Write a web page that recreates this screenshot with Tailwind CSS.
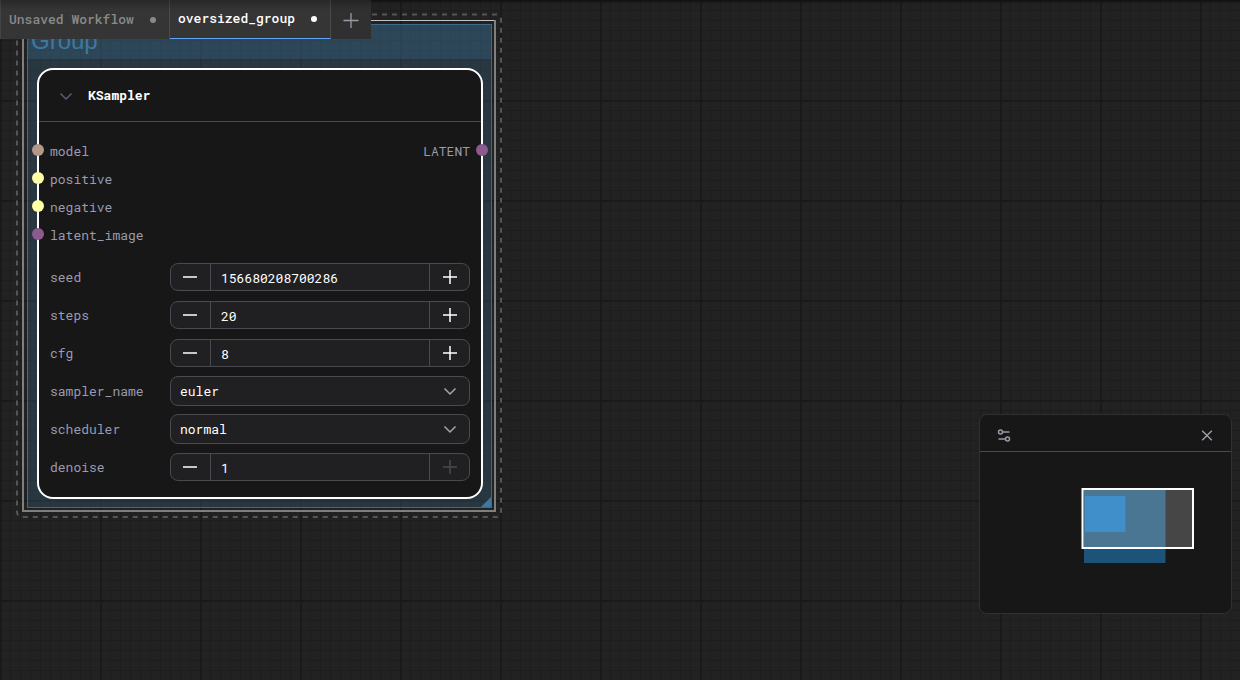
<!DOCTYPE html>
<html lang="en">
<head>
<meta charset="utf-8">
<meta name="viewport" content="width=device-width, initial-scale=1">
<title>oversized_group</title>
<script src="https://cdn.jsdelivr.net/npm/@tailwindcss/browser@4"></script>
</head>
<body class="relative min-h-screen overflow-hidden bg-[#222222] font-['Roboto_Mono','Liberation_Mono',monospace] text-[13px] leading-5 text-[#9a9ab0]">

  <!-- Canvas grid -->
  <svg class="absolute inset-0 h-full w-full" aria-hidden="true">
    <defs>
      <pattern id="grid" width="100" height="100" patternUnits="userSpaceOnUse">
        <path d="M10.5 0V100M20.5 0V100M30.5 0V100M40.5 0V100M50.5 0V100M60.5 0V100M70.5 0V100M80.5 0V100M90.5 0V100M0 10.5H100M0 20.5H100M0 30.5H100M0 40.5H100M0 50.5H100M0 60.5H100M0 70.5H100M0 80.5H100M0 90.5H100" stroke="#1d1d1d" />
        <path d="M1 0V100M0 1H100" stroke="#1a1a1a" stroke-width="2" />
      </pattern>
    </defs>
    <rect width="100%" height="100%" fill="url(#grid)" />
  </svg>

  <main>
    <!-- Group with its selection outlines -->
    <section aria-label="Group" class="absolute top-6 left-[27px] h-[484px] w-[465px] border border-[#3f789e]/80 bg-[#3f789e]/25">
      <h2 class="h-[34px] bg-[#3f789e]/25 pl-[3px] font-['Liberation_Sans',sans-serif] text-2xl leading-8 text-[#3f789e]">Group</h2>
      <svg class="absolute right-0 bottom-0 size-[10px]" viewBox="0 0 10 10" aria-hidden="true"><path d="M10 0V10H0Z" fill="#3f789e" /></svg>
    </section>
    <svg class="pointer-events-none absolute top-3 left-[15px]" width="490" height="508" fill="none" aria-hidden="true">
      <path d="M8 8.5H480" stroke="#c4c4c4" />
      <path d="M8 8V499H480V8" stroke="#7f7f7f" stroke-width="2" />
      <rect x="2" y="2.5" width="484" height="502.500" rx="5" stroke="#555555" stroke-width="2" stroke-dasharray="5 5" />
    </svg>

    <!-- KSampler node -->
    <article class="absolute top-[68px] left-[37px] w-[446px] rounded-2xl border-2 border-white bg-[#171718] pb-[15px]">
      <header class="flex h-[52px] items-center gap-[15px] border-b border-[#494a50] px-5">
        <button type="button" aria-label="Collapse node" class="flex size-[14px] items-center justify-center">
          <svg class="size-[14px]" viewBox="0 0 14 14" fill="none" stroke="#5f5f80" stroke-width="1.300" aria-hidden="true"><path d="M1.500 4.500L7 10L12.500 4.500" /></svg>
        </button>
        <h1 class="pb-[2px] font-bold text-white">KSampler</h1>
      </header>

      <div class="flex justify-between pt-[14px]">
        <ul class="-ml-[7px]">
          <li class="flex h-7 items-center gap-[6px]"><i class="size-3 rounded-full bg-[#b39888]"></i><span class="pt-[2px]">model</span></li>
          <li class="flex h-7 items-center gap-[6px]"><i class="size-3 rounded-full bg-[#ffffa5]"></i><span class="pt-[2px]">positive</span></li>
          <li class="flex h-7 items-center gap-[6px]"><i class="size-3 rounded-full bg-[#ffffa5]"></i><span class="pt-[2px]">negative</span></li>
          <li class="flex h-7 items-center gap-[6px]"><i class="size-3 rounded-full bg-[#8c5a8e]"></i><span class="pt-[2px]">latent_image</span></li>
        </ul>
        <ul class="-mr-[7px]">
          <li class="flex h-7 items-center gap-[6px]"><span class="pt-[2px]">LATENT</span><i class="size-3 rounded-full bg-[#8c5a8e]"></i></li>
        </ul>
      </div>

      <form class="mt-[14px] grid grid-cols-[120px_1fr] items-center gap-y-2 px-[11px]">
        <label for="seed">seed</label>
        <div class="my-px flex h-7 overflow-hidden rounded-lg border border-[#494a50] bg-[#202022]">
          <button type="button" aria-label="Decrease seed" class="flex w-10 items-center justify-center border-r border-[#494a50] pr-px"><svg class="size-4" viewBox="0 0 16 16" stroke="#fff" stroke-width="1.500" aria-hidden="true"><path d="M1 8H15" /></svg></button>
          <input id="seed" type="text" value="156680208700286" class="min-w-0 flex-1 bg-transparent px-[10px] pt-[2px] text-white outline-none">
          <button type="button" aria-label="Increase seed" class="flex w-10 items-center justify-center border-l border-[#494a50]"><svg class="size-4" viewBox="0 0 16 16" stroke="#fff" stroke-width="1.500" aria-hidden="true"><path d="M1 8H15M8 1V15" /></svg></button>
        </div>

        <label for="steps">steps</label>
        <div class="my-px flex h-7 overflow-hidden rounded-lg border border-[#494a50] bg-[#202022]">
          <button type="button" aria-label="Decrease steps" class="flex w-10 items-center justify-center border-r border-[#494a50] pr-px"><svg class="size-4" viewBox="0 0 16 16" stroke="#fff" stroke-width="1.500" aria-hidden="true"><path d="M1 8H15" /></svg></button>
          <input id="steps" type="text" value="20" class="min-w-0 flex-1 bg-transparent px-[10px] pt-[2px] text-white outline-none">
          <button type="button" aria-label="Increase steps" class="flex w-10 items-center justify-center border-l border-[#494a50]"><svg class="size-4" viewBox="0 0 16 16" stroke="#fff" stroke-width="1.500" aria-hidden="true"><path d="M1 8H15M8 1V15" /></svg></button>
        </div>

        <label for="cfg">cfg</label>
        <div class="my-px flex h-7 overflow-hidden rounded-lg border border-[#494a50] bg-[#202022]">
          <button type="button" aria-label="Decrease cfg" class="flex w-10 items-center justify-center border-r border-[#494a50] pr-px"><svg class="size-4" viewBox="0 0 16 16" stroke="#fff" stroke-width="1.500" aria-hidden="true"><path d="M1 8H15" /></svg></button>
          <input id="cfg" type="text" value="8" class="min-w-0 flex-1 bg-transparent px-[10px] pt-[2px] text-white outline-none">
          <button type="button" aria-label="Increase cfg" class="flex w-10 items-center justify-center border-l border-[#494a50]"><svg class="size-4" viewBox="0 0 16 16" stroke="#fff" stroke-width="1.500" aria-hidden="true"><path d="M1 8H15M8 1V15" /></svg></button>
        </div>

        <label for="sampler">sampler_name</label>
        <div class="grid h-[30px] items-center">
          <select id="sampler" class="col-start-1 row-start-1 h-[30px] w-full appearance-none rounded-lg border border-[#494a50] bg-[#202022] px-[9px] text-white outline-none"><option>euler</option></select>
          <svg class="pointer-events-none col-start-1 row-start-1 mr-[13px] size-[14px] justify-self-end" viewBox="0 0 14 14" fill="none" stroke="#a3a3ad" stroke-width="1.500" aria-hidden="true"><path d="M1.500 4.500L7 10L12.500 4.500" /></svg>
        </div>

        <label for="scheduler">scheduler</label>
        <div class="grid h-[30px] items-center">
          <select id="scheduler" class="col-start-1 row-start-1 h-[30px] w-full appearance-none rounded-lg border border-[#494a50] bg-[#202022] px-[9px] text-white outline-none"><option>normal</option></select>
          <svg class="pointer-events-none col-start-1 row-start-1 mr-[13px] size-[14px] justify-self-end" viewBox="0 0 14 14" fill="none" stroke="#a3a3ad" stroke-width="1.500" aria-hidden="true"><path d="M1.500 4.500L7 10L12.500 4.500" /></svg>
        </div>

        <label for="denoise">denoise</label>
        <div class="my-px flex h-7 overflow-hidden rounded-lg border border-[#494a50] bg-[#202022]">
          <button type="button" aria-label="Decrease denoise" class="flex w-10 items-center justify-center border-r border-[#494a50] pr-px"><svg class="size-4" viewBox="0 0 16 16" stroke="#fff" stroke-width="1.500" aria-hidden="true"><path d="M1 8H15" /></svg></button>
          <input id="denoise" type="text" value="1" class="min-w-0 flex-1 bg-transparent px-[10px] pt-[2px] text-white outline-none">
          <button type="button" disabled aria-label="Increase denoise" class="flex w-10 items-center justify-center border-l border-[#494a50]"><svg class="size-4" viewBox="0 0 16 16" stroke="#4a4a4c" stroke-width="1.500" aria-hidden="true"><path d="M1 8H15M8 1V15" /></svg></button>
        </div>
      </form>
    </article>
  </main>

  <!-- Minimap -->
  <aside aria-label="Minimap" class="absolute right-2 bottom-[66px] w-[253px] rounded-lg border border-[#303032] bg-[#171718]">
    <div class="flex h-[37px] items-center justify-between border-b border-[#494a50] px-4 pt-1">
      <button type="button" aria-label="Minimap options" class="flex size-4 items-center justify-center">
        <svg class="size-4" viewBox="0 0 16 16" fill="none" stroke="#9a9aa4" stroke-width="1.500" aria-hidden="true"><circle cx="4.500" cy="5" r="2" /><path d="M6.500 5H13.500" /><circle cx="11.500" cy="12" r="2" /><path d="M9.500 12H2.500" /></svg>
      </button>
      <button type="button" aria-label="Close minimap" class="flex size-4 items-center justify-center">
        <svg class="size-4" viewBox="0 0 16 16" fill="none" stroke="#a3a3ad" stroke-width="1.300" aria-hidden="true"><path d="M3.200 3.700L12.800 13.300M12.800 3.700L3.200 13.300" /></svg>
      </button>
    </div>
    <svg class="block h-[161px] w-full" viewBox="0 0 251 161" aria-hidden="true">
      <rect x="104" y="37" width="81.500" height="74" fill="#1e5379" />
      <rect x="102" y="36" width="111.500" height="61" fill="#464646" />
      <rect x="104" y="37" width="81.500" height="60" fill="#4b7693" />
      <rect x="105" y="44" width="40.500" height="36" fill="#408fca" />
      <rect x="102.500" y="37" width="110.500" height="59" fill="none" stroke="#fff" stroke-width="2" />
    </svg>
  </aside>

  <!-- Workflow tabs -->
  <div class="pointer-events-none absolute inset-x-0 top-0 h-[5px] bg-linear-to-b from-black/30 to-transparent"></div>
  <nav aria-label="Workflows" class="relative flex h-[39px] w-fit bg-[#353535]">
    <button type="button" class="flex w-[170px] items-center gap-4 border-x border-[#4a4a4a] border-l-[#454545] pl-2 font-medium text-[#8a8a8a]"><span class="pb-[2px]">Unsaved Workflow</span><i class="size-[6px] rounded-full bg-[#8a8a8a]"></i></button>
    <button type="button" aria-current="page" class="flex w-[161px] items-center gap-4 border-r border-b border-r-[#4a4a4a] border-b-[#60a5fa] pl-2 font-medium text-white"><span class="pb-[2px]">oversized_group</span><i class="size-[6px] rounded-full bg-white"></i></button>
    <button type="button" aria-label="New workflow" class="flex w-10 items-center justify-center bg-[#303030]">
      <svg class="size-4" viewBox="0 0 16 16" stroke="#9a9aa8" stroke-width="1.300" aria-hidden="true"><path d="M0.500 8.500H15.500M8 1V16" /></svg>
    </button>
    <span class="pointer-events-none absolute inset-x-0 top-0 h-[10px] bg-linear-to-b from-black/25 to-transparent"></span>
  </nav>
</body>
</html>
